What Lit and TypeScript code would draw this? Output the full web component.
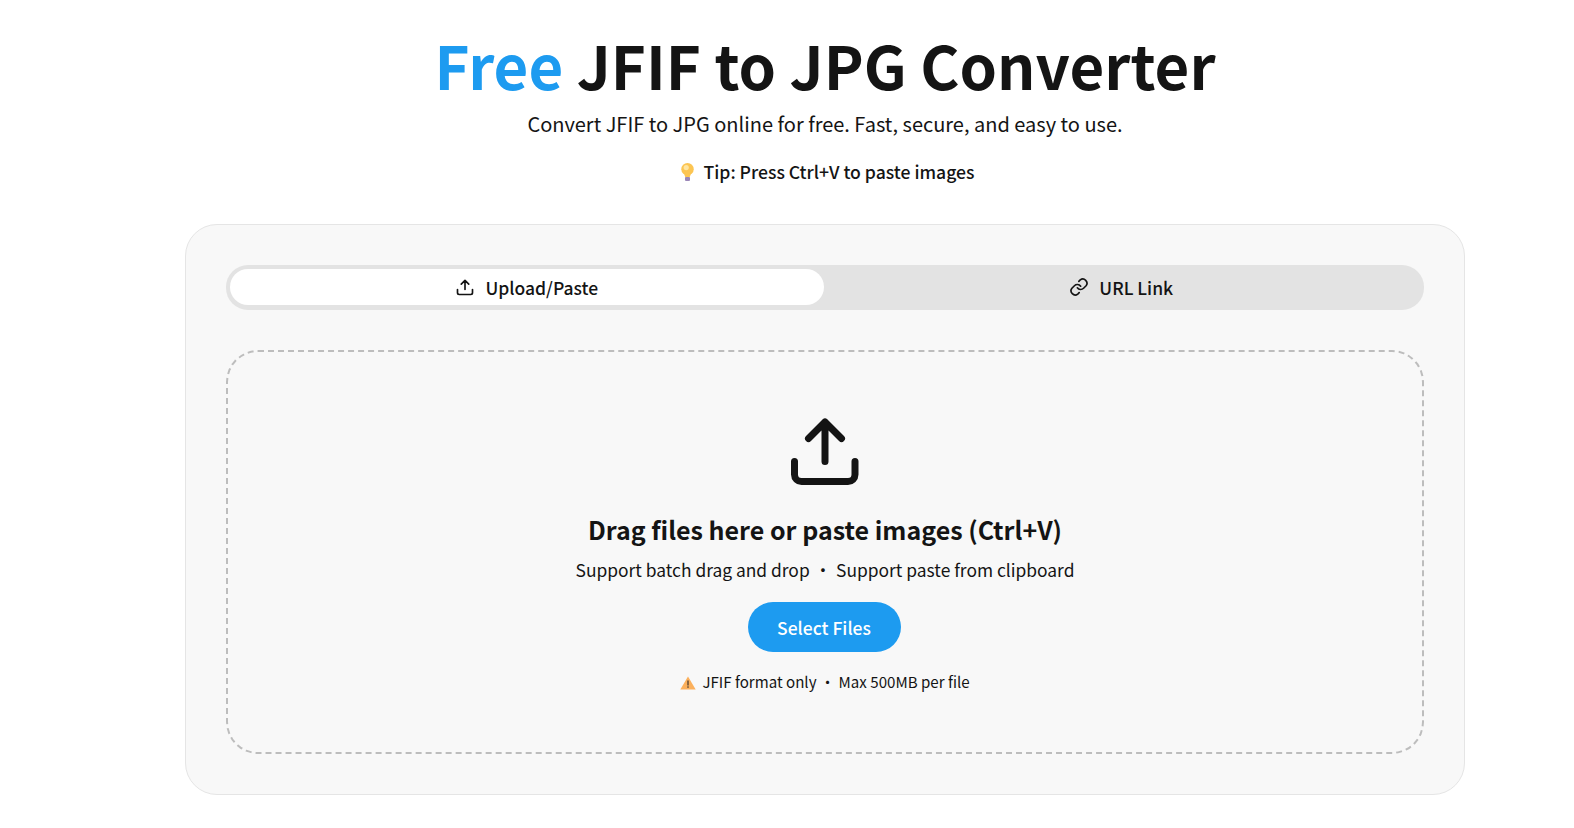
import { LitElement, html, css } from "lit";
import { customElement } from "lit/decorators.js";

@customElement("app-root")
export class AppRoot extends LitElement {
  static styles = css`
    :host { display: block; height: 828px; overflow: hidden; background: #fff; color: #141414;
      font-family: "Noto Sans CJK SC", "Noto Sans", sans-serif; }
    .page { width: 1280px; margin-left: 185px; display: flex; flex-direction: column; align-items: center; }
    h1 { margin: 22px 0 0; font-size: 59.95px; line-height: 84px; font-weight: 700; white-space: nowrap; }
    h1 span { color: #1d9bf0; }
    .sub { margin: 4px 0 0; font-size: 20px; line-height: 28px; color: #141414; }
    .tip { margin-top: 20px; font-size: 17.6px; line-height: 28px; font-weight: 500; display: flex; align-items: center; gap: 10px; }
    .tip svg { margin-left: 5px; }
    .card { box-sizing: border-box; width: 1280px; margin-top: 38px; height: 571px; padding: 40px; background: #f8f8f8; border: 1px solid #e5e5e5; border-radius: 32px; }
    .tabs { display: flex; padding: 4px 4px 5px; height: 36px; background: #e3e3e3; border-radius: 22px; }
    .tab { flex: 1; display: flex; align-items: center; justify-content: center; gap: 10px; font-size: 17.5px; font-weight: 500; border-radius: 18px; color: #141414; }
    .tab.on { background: #fff; margin-right: 1px; }
    .tab.off { margin-right: 2px; }
    .drop { box-sizing: border-box; margin-top: 40px; height: 404px; border: 2px dashed #bdbdbd; border-radius: 32px; display: flex; flex-direction: column; align-items: center; padding-top: 64px; }
    .big { display: block; }
    h2 { margin: 23px 0 0; font-size: 25px; line-height: 36px; font-weight: 700; }
    .hint { margin-top: 9px; font-size: 17.4px; line-height: 28px; display: flex; gap: 4.5px; }
    .btn { margin-top: 18px; margin-right: 2px; width: 153px; height: 50px; border-radius: 25px; background: #1d9bf0; color: #fff; font-size: 17.5px; font-weight: 500; display: flex; align-items: center; justify-content: center; }
    .note { margin-top: 17px; font-size: 15.1px; line-height: 24px; display: flex; align-items: center; gap: 3.5px; }
    .note .w { display: flex; align-items: center; gap: 6px; }
    .note svg { margin-top: 3px; }
  `;

  render() {
    return html`
      <div class="page">
        <h1><span>Free</span> JFIF to JPG Converter</h1>
        <p class="sub">Convert JFIF to JPG online for free. Fast, secure, and easy to use.</p>
        <div class="tip">
          <svg width="13" height="18" viewBox="0 0 13 18">
            <circle cx="6.500" cy="6.200" r="6.200" fill="#fcc552"/>
            <path d="M3 10.500h7L8.600 14.500H4.400z" fill="#fcc552"/>
            <circle cx="5.200" cy="4.600" r="2.600" fill="#ffe5a0"/>
            <rect x="4" y="14" width="5" height="4" rx="1" fill="#9b87b8"/>
          </svg>
          <span>Tip: Press Ctrl+V to paste images</span>
        </div>
        <div class="card">
          <div class="tabs">
            <div class="tab on">
              <svg width="20" height="20" viewBox="0 0 24 24" fill="none" stroke="#141414" stroke-width="2" stroke-linecap="round" stroke-linejoin="round"><path d="M12 15V4M7.500 8.500 12 4l4.500 4.500M3 15v4a2 2 0 0 0 2 2h14a2 2 0 0 0 2-2v-4"/></svg>
              <span>Upload/Paste</span>
            </div>
            <div class="tab off">
              <svg width="20" height="20" viewBox="0 0 24 24" fill="none" stroke="#141414" stroke-width="2" stroke-linecap="round" stroke-linejoin="round"><path d="M10 13a5 5 0 0 0 7.500.5l3-3a5 5 0 0 0-7-7l-1.700 1.700"/><path d="M14 11a5 5 0 0 0-7.500-.5l-3 3a5 5 0 0 0 7 7l1.700-1.700"/></svg>
              <span>URL Link</span>
            </div>
          </div>
          <div class="drop">
            <svg class="big" width="72" height="72" viewBox="0 0 72 72" fill="none" stroke="#141414" stroke-width="7" stroke-linecap="round" stroke-linejoin="round"><path d="M36 45.500V6M19.500 22.500 36 6l16.500 16.500M5.500 45.500v13a7 7 0 0 0 7 7H59a7 7 0 0 0 7-7v-13"/></svg>
            <h2>Drag files here or paste images (Ctrl+V)</h2>
            <div class="hint"><span>Support batch drag and drop</span><span>•</span><span>Support paste from clipboard</span></div>
            <div class="btn">Select Files</div>
            <div class="note">
              <span class="w">
                <svg width="16" height="14" viewBox="0 0 16 14"><path d="M8 .5 15.700 13.500H.3z" fill="#fbb05c"/><rect x="7.300" y="4.500" width="1.400" height="5" fill="#5b4632"/><rect x="7.300" y="10.300" width="1.400" height="1.500" fill="#5b4632"/></svg>
                <span>JFIF format only</span>
              </span>
              <span>•</span><span>Max 500MB per file</span>
            </div>
          </div>
        </div>
      </div>
    `;
  }
}
